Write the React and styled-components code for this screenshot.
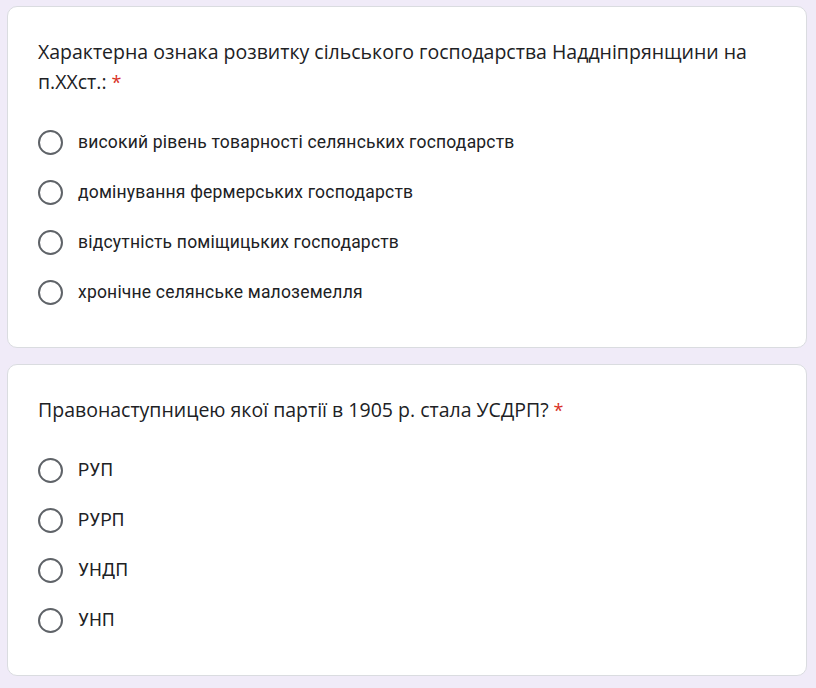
import styled, { createGlobalStyle } from "styled-components";

const GlobalStyle = createGlobalStyle`
  body {
    margin: 0;
    background: #f0ebf8;
  }
`;

const Page = styled.div`
  display: flex;
  flex-direction: column;
  gap: 16px;
  padding: 6px 0 0 7px;
  width: 800px;
`;

const Card = styled.div`
  background: #fff;
  border: 1px solid #dadce0;
  border-radius: 10px;
  padding: 30px;
`;

const Question = styled.div`
  font-family: "Open Sans", "Noto Sans", sans-serif;
  font-size: 19.5px;
  line-height: 30px;
  color: #202124;
  margin-bottom: 20px;
`;

const Required = styled.span`
  color: #d93025;
  margin-left: 5px;
  font-size: 18px;
`;

const Options = styled.div`
  display: flex;
  flex-direction: column;
`;

const Option = styled.label`
  display: flex;
  align-items: center;
  height: 50px;
  gap: 15px;
  font-family: Roboto, "Liberation Sans", sans-serif;
  font-size: 17.5px;
  color: #202124;
  letter-spacing: 0.2px;
`;

const Radio = styled.span`
  width: 25px;
  height: 25px;
  box-sizing: border-box;
  border: 2.5px solid #5f6368;
  border-radius: 50%;
  flex-shrink: 0;
`;

const questions = [
  {
    text: "Характерна ознака розвитку сільського господарства Наддніпрянщини на п.ХХст.:",
    options: [
      "високий рівень товарності селянських господарств",
      "домінування фермерських господарств",
      "відсутність поміщицьких господарств",
      "хронічне селянське малоземелля",
    ],
  },
  {
    text: "Правонаступницею якої партії в 1905 р. стала УСДРП?",
    options: ["РУП", "РУРП", "УНДП", "УНП"],
  },
];

export default function App() {
  return (
    <>
      <GlobalStyle />
      <Page>
        {questions.map((q) => (
          <Card key={q.text}>
            <Question>
              {q.text}
              <Required>*</Required>
            </Question>
            <Options>
              {q.options.map((o) => (
                <Option key={o}>
                  <Radio />
                  {o}
                </Option>
              ))}
            </Options>
          </Card>
        ))}
      </Page>
    </>
  );
}
